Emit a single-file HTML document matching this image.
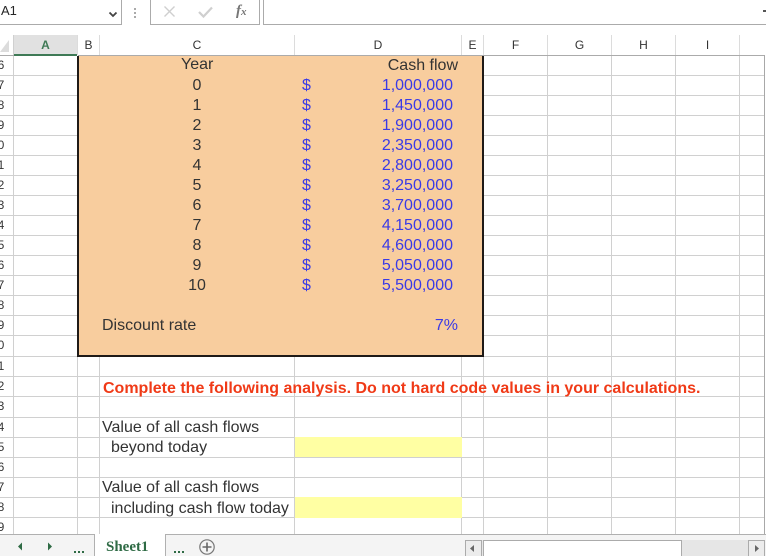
<!DOCTYPE html>
<html><head><meta charset="utf-8"><style>
html,body{margin:0;padding:0;background:#fff}
#p{position:relative;width:766px;height:556px;overflow:hidden;background:#fff;font-family:"Liberation Sans",Arial,sans-serif}
#p div{position:absolute}
.v{top:56px;width:1px;height:478px;background:#d0d0d0}
.h{left:0;width:764px;height:1px;background:#d0d0d0}
.t{font-size:16px;line-height:20px;height:20px;color:#333;white-space:nowrap}
.b{color:#3a3ae6}
.y{left:197px;width:30px;margin-left:-15px;text-align:center}
.d{left:302px}
.m{right:313px;text-align:right}
.r{left:-6px;width:14px;text-align:center;font-size:12px;line-height:14px;color:#333}
.c{top:38px;font-size:12px;line-height:14px;color:#333;text-align:center}
.hs{top:35px;width:1px;height:20px;background:#dcdcdc}
</style></head><body><div id="p">
<!-- top bar -->
<div style="left:-1px;top:-1px;width:122px;height:25px;border:1px solid #ababab;border-left:0;border-top:0"></div>
<div style="left:1px;top:3px;font-size:13px;line-height:16px;color:#262626">A1</div>
<svg style="position:absolute;left:108px;top:9px" width="10" height="10"><path d="M1.5 3.5L5 7L8.5 3.5" fill="none" stroke="#444" stroke-width="1.8"/></svg>
<div style="left:134px;top:8px;width:2px;height:2px;background:#aaa"></div>
<div style="left:134px;top:12px;width:2px;height:2px;background:#aaa"></div>
<div style="left:134px;top:16px;width:2px;height:2px;background:#aaa"></div>
<div style="left:150px;top:-1px;width:108px;height:25px;border:1px solid #ababab;border-top:0"></div>
<svg style="position:absolute;left:163px;top:5px" width="14" height="14"><path d="M1.5 1.5L11.5 11.5M11.5 1.5L1.5 11.5" fill="none" stroke="#cfcfcf" stroke-width="1.4"/></svg>
<svg style="position:absolute;left:198px;top:5px" width="16" height="14"><path d="M1 7L5.5 11.5L14 2.5" fill="none" stroke="#cfcfcf" stroke-width="2.2"/></svg>
<div style="left:236px;top:2px;font-family:'Liberation Serif',serif;font-style:italic;font-weight:bold;font-size:15px;line-height:18px;color:#777">f<span style="font-size:11px">x</span></div>
<div style="left:263px;top:-1px;width:510px;height:25px;border:1px solid #ababab;border-top:0"></div>
<div style="left:763px;top:10px;width:3px;height:2px;background:#555"></div>
<!-- column headers -->
<svg style="position:absolute;left:0;top:36px" width="13" height="19"><path d="M9 4V16H0Z" fill="#dcdcdc"/></svg>
<div style="left:14px;top:35px;width:63px;height:20px;background:#e1e1e1"></div>
<div style="left:14px;top:54px;width:63px;height:2px;background:#3f7a56"></div>
<div style="left:13px;top:35px;width:1px;height:20px;background:#d0d0d0"></div>
<div class="hs" style="left:77px"></div><div class="hs" style="left:99px"></div><div class="hs" style="left:294px"></div><div class="hs" style="left:461px"></div><div class="hs" style="left:483px"></div><div class="hs" style="left:547px"></div><div class="hs" style="left:611px"></div><div class="hs" style="left:675px"></div><div class="hs" style="left:739px"></div>
<div style="left:78px;top:55px;width:686px;height:1px;background:#ababab"></div>
<div style="left:0;top:55px;width:14px;height:1px;background:#ababab"></div>
<div class="c" style="left:14px;width:63px;font-weight:bold;color:#3f7a56">A</div>
<div class="c" style="left:78px;width:21px">B</div>
<div class="c" style="left:100px;width:194px">C</div>
<div class="c" style="left:295px;width:166px">D</div>
<div class="c" style="left:462px;width:21px">E</div>
<div class="c" style="left:484px;width:63px">F</div>
<div class="c" style="left:548px;width:63px">G</div>
<div class="c" style="left:612px;width:63px">H</div>
<div class="c" style="left:676px;width:63px">I</div>
<div style="left:764px;top:55px;width:1px;height:479px;background:#a8a8a8"></div>
<!-- grid -->
<div class="v" style="left:13px"></div><div class="v" style="left:77px"></div><div class="v" style="left:99px"></div><div class="v" style="left:294px"></div><div class="v" style="left:461px"></div><div class="v" style="left:483px"></div><div class="v" style="left:547px"></div><div class="v" style="left:611px"></div><div class="v" style="left:675px"></div><div class="v" style="left:739px"></div>
<div class="h" style="top:75px"></div><div class="h" style="top:95px"></div><div class="h" style="top:115px"></div><div class="h" style="top:135px"></div><div class="h" style="top:155px"></div><div class="h" style="top:175px"></div><div class="h" style="top:195px"></div><div class="h" style="top:215px"></div><div class="h" style="top:235px"></div><div class="h" style="top:255px"></div><div class="h" style="top:275px"></div><div class="h" style="top:295px"></div><div class="h" style="top:315px"></div><div class="h" style="top:335px"></div><div class="h" style="top:356px"></div><div class="h" style="top:376px"></div><div class="h" style="top:396px"></div><div class="h" style="top:417px"></div><div class="h" style="top:437px"></div><div class="h" style="top:457px"></div><div class="h" style="top:477px"></div><div class="h" style="top:497px"></div><div class="h" style="top:517px"></div>
<!-- row labels -->
<div class="r" style="top:58px">6</div><div class="r" style="top:78px">7</div><div class="r" style="top:98px">8</div><div class="r" style="top:118px">9</div><div class="r" style="top:138px">0</div><div class="r" style="top:158px">1</div><div class="r" style="top:178px">2</div><div class="r" style="top:198px">3</div><div class="r" style="top:218px">4</div><div class="r" style="top:238px">5</div><div class="r" style="top:258px">6</div><div class="r" style="top:278px">7</div><div class="r" style="top:298px">8</div><div class="r" style="top:318px">9</div><div class="r" style="top:338px">0</div><div class="r" style="top:359px">1</div><div class="r" style="top:379px">2</div><div class="r" style="top:399px">3</div><div class="r" style="top:420px">4</div><div class="r" style="top:440px">5</div><div class="r" style="top:460px">6</div><div class="r" style="top:480px">7</div><div class="r" style="top:500px">8</div><div class="r" style="top:520px">9</div>
<!-- box -->
<div style="left:77px;top:56px;width:403px;height:299px;background:#f8cd9e;border:2px solid #1f1a17;border-top:0;border-left-width:2px;border-right-width:2px;box-sizing:content-box"></div>
<div class="t" style="left:181px;top:55px">Year</div>
<div class="t" style="right:308px;top:56px">Cash flow</div>
<div class="t y" style="top:76px">0</div><div class="t y" style="top:96px">1</div><div class="t y" style="top:116px">2</div><div class="t y" style="top:136px">3</div><div class="t y" style="top:156px">4</div><div class="t y" style="top:176px">5</div><div class="t y" style="top:196px">6</div><div class="t y" style="top:216px">7</div><div class="t y" style="top:236px">8</div><div class="t y" style="top:256px">9</div><div class="t y" style="top:276px">10</div>
<div class="t b d" style="top:76px">$</div><div class="t b d" style="top:96px">$</div><div class="t b d" style="top:116px">$</div><div class="t b d" style="top:136px">$</div><div class="t b d" style="top:156px">$</div><div class="t b d" style="top:176px">$</div><div class="t b d" style="top:196px">$</div><div class="t b d" style="top:216px">$</div><div class="t b d" style="top:236px">$</div><div class="t b d" style="top:256px">$</div><div class="t b d" style="top:276px">$</div>
<div class="t b m" style="top:76px">1,000,000</div><div class="t b m" style="top:96px">1,450,000</div><div class="t b m" style="top:116px">1,900,000</div><div class="t b m" style="top:136px">2,350,000</div><div class="t b m" style="top:156px">2,800,000</div><div class="t b m" style="top:176px">3,250,000</div><div class="t b m" style="top:196px">3,700,000</div><div class="t b m" style="top:216px">4,150,000</div><div class="t b m" style="top:236px">4,600,000</div><div class="t b m" style="top:256px">5,050,000</div><div class="t b m" style="top:276px">5,500,000</div>
<div class="t" style="left:102px;top:316px">Discount rate</div>
<div class="t b" style="right:308px;top:316px">7%</div>
<!-- lower -->
<div class="t" style="left:103px;top:379px;font-weight:bold;color:#f03a17">Complete the following analysis. Do not hard code values in your calculations.</div>
<div class="t" style="left:102px;top:418px">Value of all cash flows</div>
<div class="t" style="left:111px;top:438px">beyond today</div>
<div style="left:295px;top:437px;width:167px;height:20px;background:#ffffa3"></div>
<div class="t" style="left:102px;top:478px">Value of all cash flows</div>
<div class="t" style="left:111px;top:499px">including cash flow today</div>
<div style="left:295px;top:497px;width:167px;height:21px;background:#ffffa3"></div>
<!-- bottom bar -->
<div style="left:0;top:534px;width:766px;height:22px;background:#f4f4f4"></div>
<div style="left:0;top:534px;width:766px;height:1px;background:#b0b0b0"></div>
<div style="left:94px;top:534px;width:70px;height:22px;background:#fff;border-left:1px solid #b0b0b0;border-right:1px solid #b0b0b0"></div>
<svg style="position:absolute;left:16px;top:542px" width="40" height="10"><path d="M6 0.5V8.5L2 4.5Z" fill="#2f6b45"/><path d="M32 0.5V8.5L36 4.5Z" fill="#2f6b45"/></svg>
<div style="left:74px;top:551px;width:2px;height:2px;background:#2f6b45"></div><div style="left:78px;top:551px;width:2px;height:2px;background:#2f6b45"></div><div style="left:82px;top:551px;width:2px;height:2px;background:#2f6b45"></div>
<div style="left:106px;top:538px;font-family:'Liberation Serif',serif;font-weight:bold;font-size:15px;line-height:18px;color:#2f6b45">Sheet1</div>
<div style="left:174px;top:551px;width:2px;height:2px;background:#2f6b45"></div><div style="left:178px;top:551px;width:2px;height:2px;background:#2f6b45"></div><div style="left:182px;top:551px;width:2px;height:2px;background:#2f6b45"></div>
<svg style="position:absolute;left:198px;top:538px" width="18" height="18"><circle cx="9" cy="9" r="7.2" fill="none" stroke="#777" stroke-width="1.2"/><path d="M9 4.5V13.5M4.5 9H13.5" stroke="#666" stroke-width="1.6"/></svg>
<div style="left:465px;top:540px;width:300px;height:16px;background:#e6e6e6"></div>
<div style="left:465px;top:540px;width:15px;height:16px;border:1px solid #ababab;border-bottom:0;background:#ececec"></div>
<svg style="position:absolute;left:468px;top:544px" width="10" height="10"><path d="M6 1V8L2 4.5Z" fill="#666"/></svg>
<div style="left:483px;top:540px;width:197px;height:16px;border:1px solid #ababab;border-bottom:0;background:#fff"></div>
<div style="left:748px;top:540px;width:15px;height:16px;border:1px solid #ababab;border-bottom:0;background:#ececec"></div>
<svg style="position:absolute;left:752px;top:544px" width="10" height="10"><path d="M3 1V8L7 4.5Z" fill="#666"/></svg>
</div></body></html>
